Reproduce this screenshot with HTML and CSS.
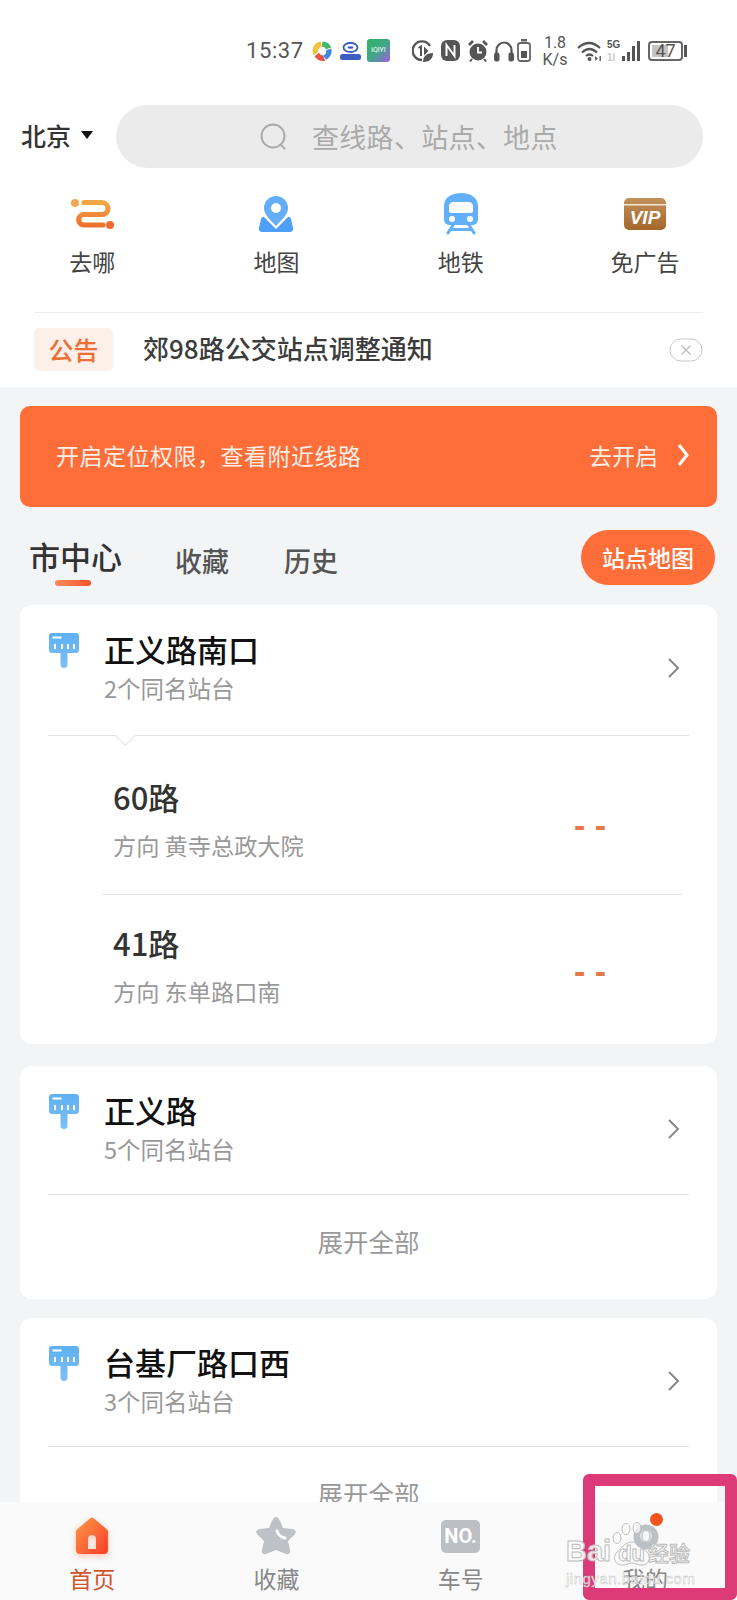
FILE: index.html
```html
<!DOCTYPE html>
<html lang="zh-CN">

<head>
    <meta charset="UTF-8">
    <meta name="viewport" content="width=device-width, initial-scale=1.0">
    <title>车来了</title>
    <link rel="stylesheet" href="styles.css">
</head>

<body>
    <div class="page">
        <div class="top">
            <div class="status">
                <span class="time">15:37</span>
                <svg class="st-app1" width="21" height="22" viewBox="0 0 24 24">
                    <path d="M12 1a11 11 0 0 1 10 7l-6 2a5 5 0 0 0-5-3z" fill="#43b96b" />
                    <path d="M22 9a11 11 0 0 1-6 13l-3-5a5 5 0 0 0 3-6z" fill="#3f8ae0" />
                    <path d="M15 23A11 11 0 0 1 3 18l5-4a5 5 0 0 0 5 3z" fill="#e8534d" />
                    <path d="M2 17A11 11 0 0 1 10 1l1 6a5 5 0 0 0-4 6z" fill="#f2c23d" />
                </svg>
                <svg class="st-app2" width="21" height="18" viewBox="0 0 21 18">
                    <ellipse cx="10.500" cy="5.500" rx="7" ry="4.500" fill="none" stroke="#3b5cc0" stroke-width="1.800" />
                    <ellipse cx="10.500" cy="5.500" rx="3" ry="1.300" fill="#3b5cc0" />
                    <rect x="0" y="12" width="21" height="6" rx="2.500" fill="#3b5cc0" />
                </svg>
                <span class="st-iqiyi">iQIYI</span>
                <svg class="st-eco" width="21" height="22" viewBox="0 0 21 22">
                    <path d="M18 6A9.300 9.300 0 1 0 10 20" fill="none" stroke="#555" stroke-width="2.400" />
                    <path d="M6.500 8L9 6.500V16" fill="none" stroke="#555" stroke-width="2" />
                    <path d="M12 6.500l4.500 4.500L12 15.500z" fill="#555" />
                    <path d="M11 22c0-6 4-9 10-9 0 6-4 9-10 9z" fill="#555" />
                </svg>
                <svg class="st-nfc" width="19" height="21" viewBox="0 0 19 21">
                    <rect width="19" height="21" rx="6" fill="#555" />
                    <path d="M5.500 16V5l8 11V5" fill="none" stroke="#fff" stroke-width="2" />
                </svg>
                <svg class="st-clock" width="20" height="22" viewBox="0 0 20 22">
                    <circle cx="10" cy="12" r="8.500" fill="#555" />
                    <path d="M10 7v5.500h4" fill="none" stroke="#fff" stroke-width="1.800" />
                    <path d="M1 5l4-4M19 5l-4-4" stroke="#555" stroke-width="2.800" />
                    <path d="M4 19l-2 2.500M16 19l2 2.500" stroke="#555" stroke-width="2" />
                </svg>
                <svg class="st-phones" width="20" height="22" viewBox="0 0 20 22">
                    <path d="M2.500 15v-5a7.500 7.500 0 0 1 15 0v5" fill="none" stroke="#555" stroke-width="2.200" />
                    <rect x="0" y="12.500" width="5.500" height="9" rx="2.200" fill="#555" />
                    <rect x="14.500" y="12.500" width="5.500" height="9" rx="2.200" fill="#555" />
                </svg>
                <svg class="st-batt" width="14" height="23" viewBox="0 0 14 23">
                    <rect x="4" y="0" width="6" height="2.500" fill="#666" />
                    <rect x="1" y="4" width="12" height="18" rx="2.500" fill="none" stroke="#666" stroke-width="1.800" />
                    <rect x="4" y="12" width="6" height="7" fill="#555" />
                </svg>
                <span class="speed">1.8<br>K/s</span>
                <svg class="st-wifi" width="25" height="21" viewBox="0 0 25 21">
                    <path d="M1 8q11-10 22 0M5 12.500q7.500-7 15 0M9 16q3.500-3 7 0" fill="none" stroke="#555" stroke-width="2.200" />
                    <circle cx="12.500" cy="19" r="2" fill="#555" />
                    <path d="M18 16l3 2.500-3 2.500z" fill="#666" />
                    <rect x="22.500" y="16" width="1.500" height="5" fill="#666" />
                </svg>
                <span class="net">5G<i>1l</i></span>
                <svg class="st-bars" width="18" height="20" viewBox="0 0 18 20">
                    <rect x="0" y="15" width="3" height="5" fill="#555" />
                    <rect x="5" y="11" width="3" height="9" fill="#555" />
                    <rect x="10" y="5" width="3" height="15" fill="#555" />
                    <rect x="15" y="0" width="3" height="20" fill="#555" />
                </svg>
                <span class="battery"><span class="level"></span><b>47</b></span>
            </div>

            <div class="search-row">
                <div class="city">北京<span class="caret"></span></div>
                <div class="search">
                    <svg width="30" height="30" viewBox="0 0 30 30">
                        <circle cx="14" cy="14" r="11.500" fill="none" stroke="#aaa" stroke-width="2" />
                        <path d="M22 23l4 4" stroke="#aaa" stroke-width="2" />
                    </svg>
                    <span>查线路、站点、地点</span>
                </div>
            </div>

            <div class="shortcuts">
                <div class="shortcut">
                    <div class="shortcut-ico">
                        <svg width="43" height="30" viewBox="0 0 43 30">
                            <defs>
                                <linearGradient id="go" x1="0" y1="0" x2="0" y2="1">
                                    <stop offset="0%" stop-color="#f2a846" />
                                    <stop offset="100%" stop-color="#ee702e" />
                                </linearGradient>
                            </defs>
                            <circle cx="4" cy="4" r="4" fill="#f2a650" />
                            <path d="M13 3.500h18a6 6 0 0 1 0 12H13a5 5 0 0 0 0 10.500h19" fill="none" stroke="url(#go)" stroke-width="5.200" stroke-linecap="round" />
                            <circle cx="39" cy="26" r="4" fill="#ee6a2e" />
                        </svg>
                    </div>
                    <span>去哪</span>
                </div>
                <div class="shortcut">
                    <div class="shortcut-ico">
                        <svg width="34" height="36" viewBox="0 0 34 36">
                            <path d="M5 21l12 12 12-12h1q1.500 0 2 2l2 9q.5 4-3 4H3q-3.500 0-3-4l2-9q.5-2 2-2z" fill="#4f9ef8" />
                            <path fill-rule="evenodd" d="M17 0a12 12 0 0 1 12 12c0 5-3 9-12 18C8 21 5 17 5 12A12 12 0 0 1 17 0zm0 7a5 5 0 1 0 .01 0z" fill="#63aef7" />
                        </svg>
                    </div>
                    <span>地图</span>
                </div>
                <div class="shortcut">
                    <div class="shortcut-ico">
                        <svg width="34" height="42" viewBox="0 0 34 42">
                            <path fill-rule="evenodd" d="M17 0c10 0 17 5 17 13v14c0 3-3 5-6 5H6c-3 0-6-2-6-5V13C0 5 7 0 17 0zM9 9c-2 0-4 2-4 4v5c0 1 1 2 2 2h20c1 0 2-1 2-2v-5c0-2-2-4-4-4z" fill="#62b0fb" />
                            <circle cx="8" cy="26" r="3" fill="#fff" />
                            <circle cx="26" cy="26" r="3" fill="#fff" />
                            <path d="M9 32l-5 8M25 32l5 8M7 36.500h20" fill="none" stroke="#62b0fb" stroke-width="3" stroke-linecap="round" />
                        </svg>
                    </div>
                    <span>地铁</span>
                </div>
                <div class="shortcut">
                    <div class="shortcut-ico">
                        <svg width="42" height="32" viewBox="0 0 42 32">
                            <defs>
                                <linearGradient id="vip" x1="0" y1="0" x2="0" y2="1">
                                    <stop offset="0%" stop-color="#bf9159" />
                                    <stop offset="100%" stop-color="#a5662a" />
                                </linearGradient>
                            </defs>
                            <rect width="42" height="32" rx="5" fill="url(#vip)" />
                            <rect y="6" width="42" height="1.500" fill="#f6e8d6" />
                            <text x="21" y="26" text-anchor="middle" class="vip-text">VIP</text>
                        </svg>
                    </div>
                    <span>免广告</span>
                </div>
            </div>

            <div class="notice">
                <span class="notice-tag">公告</span>
                <span class="notice-text">郊98路公交站点调整通知</span>
                <svg width="34" height="24" viewBox="0 0 34 24">
                    <rect x="1" y="1" width="32" height="22" rx="11" fill="#fff" stroke="#c8c8c8" />
                    <path d="M12.500 7.500l9 9M21.500 7.500l-9 9" stroke="#bbb" stroke-width="1.200" />
                </svg>
            </div>
        </div>

        <div class="main">
            <div class="banner">
                <span class="banner-text">开启定位权限<span class="comma">，</span>查看附近线路</span>
                <span class="banner-go">去开启
                    <svg width="14" height="22" viewBox="0 0 14 22">
                        <path d="M3 1l8 10-8 10" fill="none" stroke="#fff" stroke-width="3" />
                    </svg>
                </span>
            </div>

            <div class="tabs">
                <div class="tab active">市中心</div>
                <div class="tab">收藏</div>
                <div class="tab">历史</div>
                <div class="map-btn">站点地图</div>
            </div>

            <div class="card card-open">
                <div class="stop-head stop-head-open">
                    <svg class="stop-ico" width="30" height="35" viewBox="0 0 30 35">
                        <use href="#stopsign" />
                    </svg>
                    <div class="stop-name">
                        <h3>正义路南口</h3>
                        <p>2个同名站台</p>
                    </div>
                    <svg class="more" width="14" height="22" viewBox="0 0 14 22">
                        <path d="M2 2l9 9-9 9" fill="none" stroke="#888" stroke-width="2" />
                    </svg>
                </div>
                <div class="rule notch"></div>
                <div class="line">
                    <div>
                        <h4>60路</h4>
                        <p>方向 黄寺总政大院</p>
                    </div>
                    <span class="eta">- -</span>
                </div>
                <div class="line line-next">
                    <div>
                        <h4>41路</h4>
                        <p>方向 东单路口南</p>
                    </div>
                    <span class="eta">- -</span>
                </div>
            </div>

            <div class="card">
                <div class="stop-head">
                    <svg class="stop-ico" width="30" height="35" viewBox="0 0 30 35">
                        <use href="#stopsign" />
                    </svg>
                    <div class="stop-name">
                        <h3>正义路</h3>
                        <p>5个同名站台</p>
                    </div>
                    <svg class="more" width="14" height="22" viewBox="0 0 14 22">
                        <path d="M2 2l9 9-9 9" fill="none" stroke="#888" stroke-width="2" />
                    </svg>
                </div>
                <div class="rule"></div>
                <div class="expand">展开全部</div>
            </div>

            <div class="card">
                <div class="stop-head">
                    <svg class="stop-ico" width="30" height="35" viewBox="0 0 30 35">
                        <use href="#stopsign" />
                    </svg>
                    <div class="stop-name">
                        <h3>台基厂路口西</h3>
                        <p>3个同名站台</p>
                    </div>
                    <svg class="more" width="14" height="22" viewBox="0 0 14 22">
                        <path d="M2 2l9 9-9 9" fill="none" stroke="#888" stroke-width="2" />
                    </svg>
                </div>
                <div class="rule"></div>
                <div class="expand">展开全部</div>
            </div>
        </div>

        <div class="tabbar">
            <div class="nav nav-on">
                <svg class="home-ico" width="36" height="40" viewBox="0 0 36 40">
                    <defs>
                        <linearGradient id="home" x1="0" y1="0" x2="1" y2="1">
                            <stop offset="0%" stop-color="#fb9a45" />
                            <stop offset="100%" stop-color="#fb3d2a" />
                        </linearGradient>
                    </defs>
                    <path fill-rule="evenodd" d="M16 2.500a3 3 0 0 1 4 0l13 11a3 3 0 0 1 1 2.500v18a4 4 0 0 1-4 4H6a4 4 0 0 1-4-4V16a3 3 0 0 1 1-2.500zM14 33h8V23a4 4 0 0 0-8 0z" fill="url(#home)" />
                </svg>
                <span>首页</span>
            </div>
            <div class="nav">
                <svg width="42" height="40" viewBox="0 0 42 40">
                    <path d="M21 1c2 0 3 2 4 4l3 7 9 1c3 0 5 3 3 5l-7 7 2 9c1 3-2 5-4 4l-10-4-10 4c-2 1-5-1-4-4l2-9-7-7c-2-2 0-5 3-5l9-1 3-7c1-2 2-4 4-4z" fill="#bec2c8" />
                    <path d="M22 15c1 4 4 6 8 7" fill="none" stroke="#fff" stroke-width="3" stroke-linecap="round" />
                </svg>
                <span>收藏</span>
            </div>
            <div class="nav">
                <span class="no-badge">NO.</span>
                <span>车号</span>
            </div>
            <div class="nav">
                <svg width="42" height="40" viewBox="0 0 42 40">
                    <circle cx="22" cy="21" r="12.500" fill="#bcbfc4" />
                    <circle cx="22" cy="20" r="6" fill="#e3e5e8" />
                </svg>
                <span>我的</span>
            </div>
        </div>

        <div class="highlight"><span class="dot"></span></div>

        <div class="watermark">
            <svg class="wm-paw" width="44" height="50" viewBox="0 0 44 50">
                <g fill="rgba(255,255,255,.65)" stroke="#bdbdbd" stroke-width="1">
                    <ellipse cx="6" cy="16" rx="4" ry="5.500" />
                    <ellipse cx="15" cy="7" rx="4" ry="5.500" />
                    <ellipse cx="26" cy="6" rx="4" ry="5.500" />
                    <ellipse cx="35" cy="14" rx="4" ry="5.500" />
                    <path d="M21 20c7 0 10 6 15 10 5 5 2 14-6 13-3 0-6-2-9-2s-6 2-9 2c-8 1-11-8-6-13 5-4 8-10 15-10z" fill="none" />
                </g>
            </svg>
            <div class="wm-logo">Bai<span class="wm-du">du</span><span class="wm-cn">经验</span></div>
            <div class="wm-url">jingyan.baidu.com</div>
        </div>

        <svg class="defs-holder" width="0" height="0">
            <defs>
                <linearGradient id="sign" x1="0" y1="0" x2="0" y2="1">
                    <stop offset="0%" stop-color="#5fb0f2" />
                    <stop offset="100%" stop-color="#7cc0f7" />
                </linearGradient>
                <g id="stopsign">
                    <path d="M3 0h24a3 3 0 0 1 3 3v14a3 3 0 0 1-3 3H18.500v11.500a3.500 3.500 0 0 1-7 0V20H3a3 3 0 0 1-3-3V3a3 3 0 0 1 3-3z" fill="url(#sign)" />
                    <rect x="3.500" y="3.500" width="9" height="2" fill="#fff" />
                    <path d="M6 11v5M13 11v5M19 11v5M25 11v5" stroke="#fff" stroke-width="2" />
                </g>
            </defs>
        </svg>
    </div>
</body>

</html>
```

FILE: styles.css
```css
* {
    box-sizing: border-box;
}

html,
body {
    margin: 0;
    padding: 0;
}

body {
    font-family: "Noto Sans CJK SC", "Noto Sans", sans-serif;
    color: #333;
    background: #f3f4f6;
}

h3,
h4,
p {
    margin: 0;
}

.page {
    position: relative;
    width: 737px;
    height: 1600px;
    overflow: hidden;
}

.top {
    height: 387px;
    background: #fff;
}

/* status bar */
.status {
    display: flex;
    align-items: center;
    height: 99px;
    padding: 2px 0 0 246px;
    color: #555;
}

.status svg,
.status span {
    flex: none;
}

.time {
    width: 57px;
    font-family: Roboto, sans-serif;
    font-size: 22px;
    letter-spacing: .6px;
}

.st-app1 {
    margin-left: 9px;
}

.st-app2 {
    margin-left: 7px;
}

.st-iqiyi {
    width: 23px;
    height: 23px;
    margin-left: 6px;
    border-radius: 3px;
    background: linear-gradient(135deg, #2fb45a, #3fa88a 50%, #a35be0);
    color: #fff;
    font: 7px/23px Roboto, sans-serif;
    text-align: center;
}

.st-eco {
    margin-left: 22px;
}

.st-nfc,
.st-clock {
    margin-left: 8px;
}

.st-phones {
    margin-left: 6px;
}

.st-batt {
    margin-left: 3px;
}

.speed {
    width: 26px;
    margin-left: 11px;
    font-family: Roboto, sans-serif;
    font-size: 16px;
    line-height: 17px;
    text-align: center;
    white-space: nowrap;
}

.st-wifi {
    margin-left: 9px;
}

.net {
    width: 11px;
    margin-left: 5px;
    font: bold 10px/13px "Liberation Sans Narrow", "Liberation Sans", sans-serif;
    white-space: nowrap;
}

.net i {
    display: block;
    color: #ccc;
    font-style: normal;
}

.st-bars {
    margin-left: 4px;
}

.battery {
    position: relative;
    width: 35px;
    height: 20px;
    margin-left: 8px;
    border: 2px solid #666;
    border-radius: 4px;
    font-family: Roboto, sans-serif;
    font-size: 18px;
    line-height: 16px;
    text-align: center;
}

.battery b {
    position: relative;
    font-weight: 400;
}

.level {
    position: absolute;
    left: 2px;
    top: 2px;
    width: 16px;
    height: 12px;
    background: #c4c4c4;
}

.battery::after {
    content: "";
    position: absolute;
    right: -6px;
    top: 2px;
    width: 3px;
    height: 12px;
    background: #555;
}

/* search row */
.search-row {
    display: flex;
    align-items: center;
    height: 75px;
    padding: 0 34px 0 21px;
}

.city {
    display: flex;
    align-items: center;
    width: 95px;
    margin-bottom: 4px;
    font-size: 25px;
    font-weight: 500;
}

.caret {
    margin-left: 10px;
    border: 6px solid transparent;
    border-top: 8px solid #111;
    border-bottom: 0;
}

.search {
    flex: 1;
    height: 63px;
    display: flex;
    align-items: center;
    gap: 23px;
    padding-left: 143px;
    border-radius: 32px;
    background: #ebebeb;
    color: #aaa;
    font-size: 27px;
    letter-spacing: .3px;
}

/* shortcuts */
.shortcuts {
    display: grid;
    grid-template-columns: repeat(4, 1fr);
    margin-top: 19px;
}

.shortcut {
    display: flex;
    flex-direction: column;
    align-items: center;
    gap: 10px;
    font-size: 23px;
    line-height: 32px;
    color: #444;
}

.shortcut-ico {
    display: flex;
    align-items: center;
    height: 42px;
}

.vip-text {
    font: italic bold 19px "Liberation Sans", sans-serif;
    fill: #fff;
}

/* notice */
.notice {
    display: flex;
    align-items: center;
    height: 75px;
    margin: 35px 34px 0;
    border-top: 1px solid #eee;
}

.notice-tag {
    width: 79px;
    height: 43px;
    margin-bottom: 2px;
    border-radius: 5px;
    background: #fdf0e9;
    color: #ee6f35;
    font-size: 25px;
    font-weight: 500;
    line-height: 43px;
    text-align: center;
}

.notice-text {
    flex: 1;
    margin: 0 0 5px 30px;
    font-size: 26px;
    font-weight: 500;
    color: #3c3c3c;
}

/* main column */
.main {
    padding: 19px 20px 0;
}

.banner {
    display: flex;
    align-items: center;
    justify-content: space-between;
    height: 101px;
    padding: 0 27px 3px 36px;
    border-radius: 10px;
    background: #ff6d39;
    color: #fdeee6;
    font-size: 23px;
}

.banner-text {
    letter-spacing: .5px;
}

.comma {
    font-family: "Noto Sans CJK TC", sans-serif;
}

.banner-go {
    display: flex;
    align-items: center;
    gap: 18px;
}

.tabs {
    display: flex;
    align-items: center;
    height: 98px;
    padding-left: 9px;
}

.tab {
    width: 109px;
    margin-top: 8px;
    font-size: 27px;
    font-weight: 500;
    color: #555;
}

.tab.active {
    position: relative;
    width: 146px;
    margin-top: -2px;
    font-size: 31px;
    color: #333;
}

.tab.active::after {
    content: "";
    position: absolute;
    left: 26px;
    top: 47px;
    width: 36px;
    height: 6px;
    border-radius: 3px;
    background: linear-gradient(90deg, #ff8a5c, #f2552a);
}

.map-btn {
    width: 134px;
    height: 55px;
    margin: 2px 2px 0 auto;
    border-radius: 28px;
    background: #ff6d39;
    color: #fff;
    font-size: 23px;
    font-weight: 500;
    line-height: 55px;
    text-align: center;
}

.card {
    margin-bottom: 19px;
    border-radius: 12px;
    background: #fff;
}

.card-open {
    margin-bottom: 22px;
}

.stop-head {
    display: flex;
    height: 128px;
    padding: 22px 36px 0 29px;
}

.stop-head-open {
    height: 130px;
}

.stop-ico {
    flex: none;
    margin-top: 6px;
}

.stop-name {
    flex: 1;
    margin-left: 25px;
}

.stop-name h3 {
    font-size: 31px;
    font-weight: 500;
    line-height: 44px;
    color: #111;
}

.stop-name p {
    margin-top: 2px;
    font-size: 23.5px;
    line-height: 30px;
    color: #999;
}

.more {
    margin-top: 30px;
}

.rule {
    position: relative;
    height: 1px;
    margin: 0 28px;
    background: #e2e2e2;
}

.notch::after {
    content: "";
    position: absolute;
    left: 70px;
    top: -7px;
    width: 14px;
    height: 14px;
    background: #fff;
    border-right: 1px solid #e2e2e2;
    border-bottom: 1px solid #e2e2e2;
    transform: rotate(45deg);
}

.line {
    display: flex;
    align-items: flex-start;
    justify-content: space-between;
    height: 158px;
    margin: 0 34px 0 82px;
    padding: 41px 77px 0 11px;
}

.line h4 {
    font-size: 31px;
    font-weight: 500;
    line-height: 40px;
    color: #333;
}

.line p {
    margin-top: 12px;
    font-size: 23.2px;
    line-height: 32px;
    color: #999;
}

.line-next {
    height: 150px;
    padding-top: 28px;
    border-top: 1px solid #e8e8e8;
}

.eta {
    margin-top: 31px;
    color: #e5774a;
    font: bold 34px/34px "Liberation Sans", sans-serif;
}

.expand {
    height: 104px;
    color: #999;
    font-size: 25.5px;
    line-height: 92px;
    text-align: center;
}

/* bottom nav */
.tabbar {
    position: absolute;
    left: 0;
    right: 0;
    bottom: 0;
    display: grid;
    grid-template-columns: repeat(4, 1fr);
    height: 98px;
    padding-top: 14px;
    background: #fafafa;
}

.nav {
    display: flex;
    flex-direction: column;
    align-items: center;
    gap: 7px;
    color: #888;
    font-size: 23px;
    line-height: 30px;
}

.nav-on {
    color: #d0552f;
}

.home-ico {
    filter: drop-shadow(0 2px 3px rgba(251, 90, 50, .35));
}

.no-badge {
    width: 39px;
    height: 33px;
    margin: 4px 0 3px;
    border-radius: 5px;
    background: #bcbfc3;
    color: #fff;
    font: bold 20px/33px Roboto, sans-serif;
    text-align: center;
}

/* annotation on the screenshot */
.highlight {
    position: absolute;
    left: 583px;
    top: 1474px;
    width: 154px;
    height: 126px;
    border: 12px solid #dc3b78;
    border-radius: 6px;
}

.dot {
    position: absolute;
    left: 55px;
    top: 27px;
    width: 13px;
    height: 13px;
    border-radius: 50%;
    background: #f2541f;
}

.watermark {
    position: absolute;
    left: 566px;
    top: 1537px;
    color: rgba(255, 255, 255, .85);
}

.wm-paw {
    position: absolute;
    left: 45px;
    top: -15px;
}

.wm-logo {
    position: relative;
    font: bold 29px/28px "Liberation Sans", sans-serif;
    -webkit-text-stroke: 1px #bdbdbd;
    white-space: nowrap;
}

.wm-du {
    margin-left: 7px;
    font-size: 22px;
}

.wm-cn {
    margin-left: 3px;
    font: 500 21px "Noto Sans CJK SC", sans-serif;
}

.wm-url {
    position: relative;
    margin-top: 2px;
    font: 15px/18px "Liberation Sans", sans-serif;
    -webkit-text-stroke: .4px #bbb;
    letter-spacing: .5px;
    white-space: nowrap;
}

.defs-holder {
    position: absolute;
}
```
